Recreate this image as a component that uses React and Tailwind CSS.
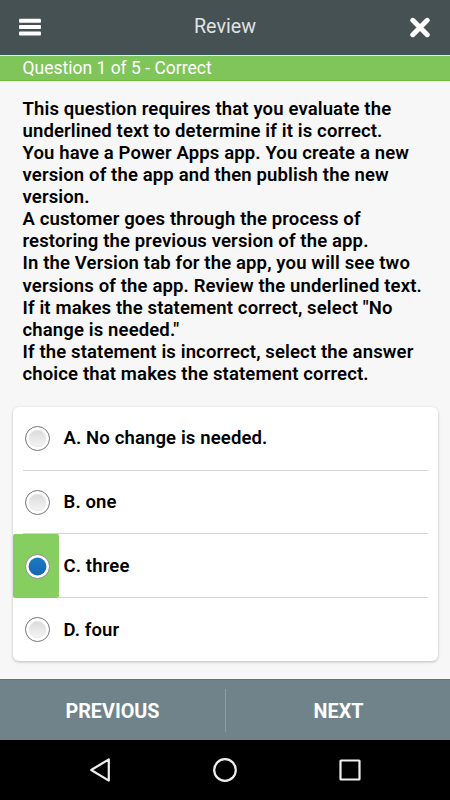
import React, { useState } from "react";

const questionLines = [
  "This question requires that you evaluate the",
  "underlined text to determine if it is correct.",
  "You have a Power Apps app. You create a new",
  "version of the app and then publish the new",
  "version.",
  "A customer goes through the process of",
  "restoring the previous version of the app.",
  "In the Version tab for the app, you will see two",
  "versions of the app. Review the underlined text.",
  "If it makes the statement correct, select \"No",
  "change is needed.\"",
  "If the statement is incorrect, select the answer",
  "choice that makes the statement correct.",
];

const answers = ["A. No change is needed.", "B. one", "C. three", "D. four"];

const Radio = ({ checked }) => (
  <svg width="25" height="25" viewBox="0 0 25 25">
    <defs>
      <linearGradient id="radioOff" x1="0" y1="0" x2="0" y2="1">
        <stop offset="0" stopColor="#dadada" />
        <stop offset="1" stopColor="#f5f5f5" />
      </linearGradient>
      <linearGradient id="radioOn" x1="0" y1="0" x2="0" y2="1">
        <stop offset="0" stopColor="#1d79c4" />
        <stop offset="1" stopColor="#1566b3" />
      </linearGradient>
    </defs>
    <circle cx="12.5" cy="12.5" r="12" fill="#fff" stroke={checked ? "#8b8b95" : "#777"} />
    {checked ? (
      <circle cx="12.5" cy="12.5" r="8.9" fill="url(#radioOn)" />
    ) : (
      <circle cx="12.5" cy="12.5" r="8.3" fill="url(#radioOff)" stroke="#e6e6e6" strokeWidth="0.8" />
    )}
  </svg>
);

const Header = () => (
  <header className="flex h-[55px] items-center justify-between border-b border-[#3b5962] bg-[#465153] px-[19px]">
    <button aria-label="Menu">
      <svg width="22" height="18" viewBox="0 0 22 18" fill="#fff">
        <rect y="0.8" width="22" height="4" rx="1" />
        <rect y="7.1" width="22" height="4" rx="1" />
        <rect y="13.5" width="22" height="4" rx="1" />
      </svg>
    </button>
    <h1 className="text-[19.7px] leading-6 text-[#dfe3e3]">Review</h1>
    <button aria-label="Close">
      <svg width="22" height="22" viewBox="0 0 22 22" stroke="#fff" strokeWidth="5" strokeLinecap="round">
        <path d="M3.8 4.3L18.2 18.7M18.2 4.3L3.8 18.7" />
      </svg>
    </button>
  </header>
);

const AndroidNav = () => (
  <nav className="flex h-[60px] items-center justify-center gap-[101px] bg-black">
    <svg width="24" height="26" viewBox="0 0 24 26" fill="none" stroke="#eee" strokeWidth="2.2" strokeLinejoin="round">
      <path d="M20.8 2.4V23.6L3.2 13Z" />
    </svg>
    <svg width="24" height="24" viewBox="0 0 24 24" fill="none" stroke="#eee" strokeWidth="2.2">
      <circle cx="12" cy="12" r="10.8" />
    </svg>
    <svg width="24" height="24" viewBox="0 0 24 24" fill="none" stroke="#eee" strokeWidth="2.2">
      <rect x="2.5" y="2.5" width="19" height="19" rx="0.5" />
    </svg>
  </nav>
);

const App = () => {
  const [selected, setSelected] = useState(2);

  return (
    <div className="flex h-[800px] w-[450px] flex-col overflow-hidden bg-[#f7f7f7] font-['Roboto',sans-serif]">
      <Header />
      <div className="flex h-[26px] items-center border-t border-b border-t-[#dfeeda] border-b-[#6fbb3a] bg-[#80c55a] pl-[22.5px] text-[17.5px] leading-6 text-white">
        Question 1 of 5 - Correct
      </div>

      <main className="flex-1">
        <p className="pt-[16.5px] pl-[22.5px] text-[18.5px] leading-[22.13px] font-semibold tracking-[0.135px] whitespace-nowrap text-black">
          {questionLines.map((line) => (
            <span key={line} className="block">
              {line}
            </span>
          ))}
        </p>

        <ul className="mx-[12.5px] mt-[21.8px] rounded-md bg-white shadow-[0_1px_3px_rgba(0,0,0,0.25)]">
          {answers.map((answer, i) => (
            <li key={answer} className="flex h-[63.6px] cursor-pointer" onClick={() => setSelected(i)}>
              <div
                className={`flex w-[46px] shrink-0 ${
                  selected === i ? "rounded-xs bg-[#85ce5f]" : ""
                }`}
              >
                <div
                  className={`ml-[10px] flex flex-1 items-center pl-[2.5px] ${
                    i < answers.length - 1 ? "pt-px" : ""
                  } ${i < answers.length - 1 && selected !== i ? "border-b border-[#d3d3d3]" : ""}`}
                >
                  <Radio checked={selected === i} />
                </div>
              </div>
              <div
                className={`mr-[10px] flex flex-1 items-center pt-[2px] pl-[5px] text-[18.5px] font-semibold tracking-[0.135px] text-black ${
                  i < answers.length - 1 ? "border-b border-[#d3d3d3]" : ""
                }`}
              >
                {answer}
              </div>
            </li>
          ))}
        </ul>
      </main>

      <footer className="flex h-[61px] items-center border-t border-[#5f747e] bg-[#70838b] text-[19.8px] font-bold text-white">
        <button className="w-[225px] pt-[3px]">PREVIOUS</button>
        <span className="h-[43px] w-px bg-[#8f9da3]" />
        <button className="flex-1 pt-[3px] pl-px">NEXT</button>
      </footer>
      <AndroidNav />
    </div>
  );
};

export default App;
